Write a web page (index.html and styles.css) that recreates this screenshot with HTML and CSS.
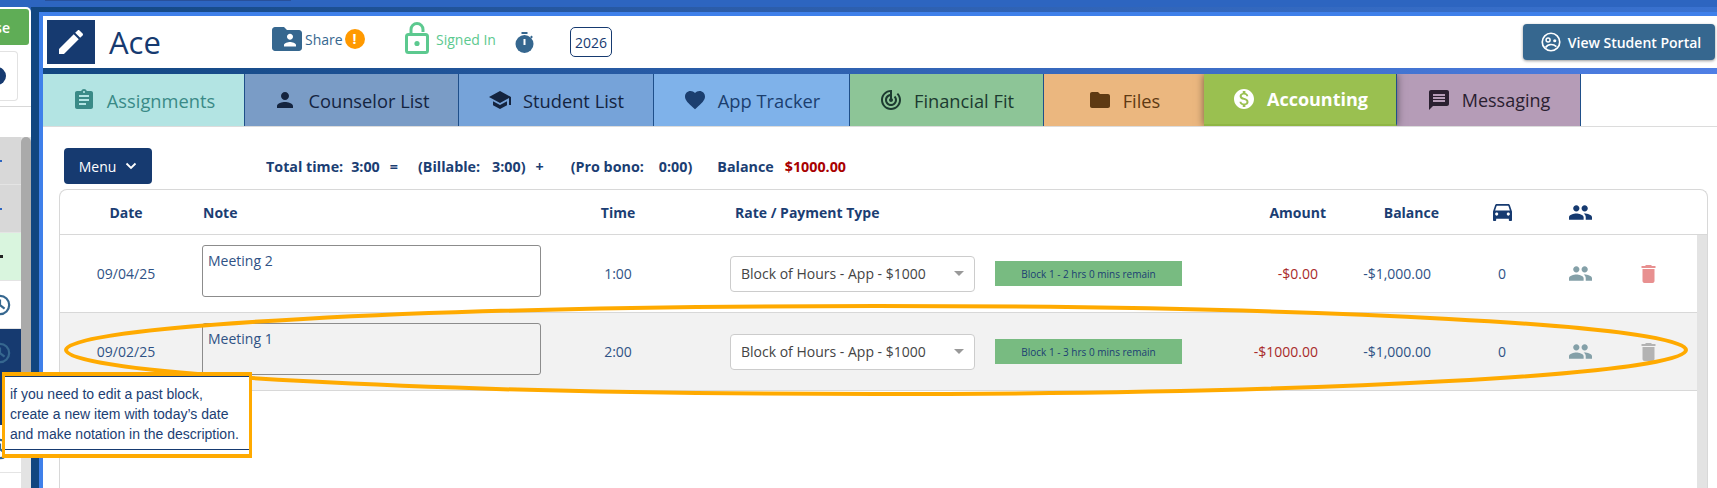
FILE: index.html
```html
<!DOCTYPE html>
<html lang="en">
<head>
  <meta charset="UTF-8" />
  <meta name="viewport" content="width=device-width, initial-scale=1.0"/>
  <title>Accounting - Ace</title>
  <link rel="stylesheet" href="styles.css">
</head>
<body>
  <div class="top-strip"><div class="top-search"></div></div>
  <div class="app">
    <aside class="sidebar">
      <div class="close-btn"><span>Close</span></div>
      <div class="side-card"><span class="side-dot"></span></div>
      <div class="side-rule"></div>
      <div class="side-list">
        <div class="side-rows">
          <div class="side-row grey"><span class="tick"></span></div>
          <div class="side-row grey"><span class="tick"></span></div>
          <div class="side-row green"><span class="check"></span></div>
          <div class="side-row">
            <svg class="clock" viewBox="0 0 24 24"><circle cx="12" cy="12" r="10" fill="none" stroke="#36678f" stroke-width="2.4"/><path d="M12 6v6l5 4" fill="none" stroke="#36678f" stroke-width="2.4"/></svg>
          </div>
          <div class="side-row navy">
            <svg class="clock" viewBox="0 0 24 24"><circle cx="12" cy="12" r="10" fill="none" stroke="#36678f" stroke-width="2.4"/><path d="M12 6v6l5 4" fill="none" stroke="#36678f" stroke-width="2.4"/></svg>
          </div>
          <div class="side-row navy"></div>
          <div class="side-row">
            <svg class="clock" viewBox="0 0 24 24"><circle cx="12" cy="12" r="10" fill="none" stroke="#36678f" stroke-width="2.4"/><path d="M12 6v6l5 4" fill="none" stroke="#36678f" stroke-width="2.4"/></svg>
          </div>
        </div>
        <div class="side-scroll"><div class="side-thumb"></div></div>
      </div>
    </aside>

    <div class="frame">
      <div class="frame-band"></div>
      <main class="panel">
        <header class="head">
          <div class="logo">
            <svg viewBox="0 0 24 24"><path d="M3 17.25V21h3.75L17.81 9.94l-3.75-3.75L3 17.25zM20.71 7.04c.39-.39.39-1.02 0-1.41l-2.34-2.34c-.39-.39-1.02-.39-1.41 0l-1.83 1.83 3.75 3.75 1.83-1.83z"/></svg>
          </div>
          <h1 class="name">Ace</h1>
          <div class="share">
            <svg viewBox="2 4 20 16"><path d="M20 6h-8l-2-2H4c-1.1 0-1.99.9-1.99 2L2 18c0 1.1.9 2 2 2h16c1.1 0 2-.9 2-2V8c0-1.1-.9-2-2-2zm-6 2.5c1.1 0 2 .9 2 2s-.9 2-2 2-2-.9-2-2 .9-2 2-2zm4 8.5h-8v-1c0-1.33 2.67-2 4-2s4 .67 4 2v1z"/></svg>
            <span>Share</span>
            <b class="alert">!</b>
          </div>
          <div class="signed">
            <svg viewBox="0 0 24 32"><rect x="1.5" y="12.5" width="21" height="18" rx="2" fill="none" stroke="#5cc98f" stroke-width="3"/><path d="M6 12V7.500a6 6 0 0 1 12 0V10" fill="none" stroke="#5cc98f" stroke-width="3"/><circle cx="12" cy="21.500" r="2.600" fill="#5cc98f"/></svg>
            <span>Signed In</span>
          </div>
          <svg class="stopwatch" viewBox="3 1 18 21"><path d="M9 1h6v2H9zM17.6 6l1.4-1.4 1.400 1.400-1.400 1.400z"/><circle cx="12" cy="13" r="9"/><path d="M11 8h2v6h-2z" fill="#fff"/></svg>
          <div class="year">2026</div>
          <button class="portal-btn" type="button">
            <svg viewBox="0 0 24 24" fill="none" stroke="#fff">
              <circle cx="12" cy="12" r="10.500" stroke-width="2"/>
              <circle cx="8.500" cy="9.500" r="2.400" stroke-width="1.800"/>
              <circle cx="16.500" cy="10.500" r="1.900" fill="#fff" stroke="none"/>
              <path d="M5.500 18.500c2-2.800 4.200-3.500 6.500-3.500s4.500.7 6.500 2.500" stroke-width="2"/>
            </svg>
            View Student Portal
          </button>
        </header>
        <div class="head-strip"></div>

        <nav class="tabs">
          <a class="tab tab-assign">
            <svg viewBox="0 0 24 24"><path d="M19 3h-4.18C14.4 1.84 13.3 1 12 1c-1.3 0-2.4.84-2.82 2H5c-1.1 0-2 .9-2 2v14c0 1.1.9 2 2 2h14c1.1 0 2-.9 2-2V5c0-1.1-.9-2-2-2zm-7 0c.55 0 1 .45 1 1s-.45 1-1 1-1-.45-1-1 .45-1 1-1zm2 14H7v-2h7v2zm3-4H7v-2h10v2zm0-4H7V7h10v2z"/></svg>
            Assignments
          </a>
          <a class="tab tab-counselor">
            <svg viewBox="0 0 24 24"><path d="M12 12c2.21 0 4-1.79 4-4s-1.79-4-4-4-4 1.79-4 4 1.79 4 4 4zm0 2c-2.67 0-8 1.34-8 4v2h16v-2c0-2.66-5.33-4-8-4z"/></svg>
            Counselor List
          </a>
          <a class="tab tab-student">
            <svg viewBox="0 0 24 24"><path d="M5 13.18v4L12 21l7-3.82v-4L12 17l-7-3.82zM12 3L1 9l11 6 9-4.91V17h2V9L12 3z"/></svg>
            Student List
          </a>
          <a class="tab tab-app">
            <svg viewBox="0 0 24 24"><path d="M12 21.35l-1.45-1.32C5.4 15.36 2 12.28 2 8.5 2 5.42 4.42 3 7.5 3c1.74 0 3.41.81 4.5 2.09C13.09 3.81 14.76 3 16.5 3 19.58 3 22 5.42 22 8.5c0 3.78-3.4 6.86-8.55 11.54L12 21.35z"/></svg>
            App Tracker
          </a>
          <a class="tab tab-fin">
            <svg viewBox="0 0 24 24"><path d="M19.07 4.93l-1.41 1.41C19.1 7.79 20 9.79 20 12c0 4.42-3.58 8-8 8s-8-3.58-8-8c0-4.08 3.05-7.44 7-7.93v2.02C8.16 6.57 6 9.03 6 12c0 3.31 2.69 6 6 6s6-2.69 6-6c0-1.66-.67-3.16-1.76-4.24l-1.41 1.41C15.55 9.9 16 10.9 16 12c0 2.21-1.79 4-4 4s-4-1.79-4-4c0-1.86 1.28-3.41 3-3.86v2.14c-.6.35-1 .98-1 1.72 0 1.1.9 2 2 2s2-.9 2-2c0-.74-.4-1.38-1-1.72V2h-1C6.48 2 2 6.48 2 12s4.48 10 10 10 10-4.48 10-10c0-2.76-1.12-5.26-2.93-7.07z"/></svg>
            Financial Fit
          </a>
          <a class="tab tab-files">
            <svg viewBox="0 0 24 24"><path d="M10 4H4c-1.1 0-1.99.9-1.99 2L2 18c0 1.1.9 2 2 2h16c1.1 0 2-.9 2-2V8c0-1.1-.9-2-2-2h-8l-2-2z"/></svg>
            Files
          </a>
          <a class="tab tab-accounting">
            <svg viewBox="0 0 24 24"><path d="M12 2C6.48 2 2 6.48 2 12s4.48 10 10 10 10-4.48 10-10S17.52 2 12 2zm1.41 16.09V20h-2.67v-1.93c-1.71-.36-3.16-1.46-3.27-3.4h1.96c.1 1.05.82 1.87 2.65 1.87 1.96 0 2.4-.98 2.4-1.59 0-.83-.44-1.61-2.67-2.14-2.48-.6-4.18-1.62-4.18-3.67 0-1.72 1.39-2.84 3.11-3.21V4h2.67v1.95c1.86.45 2.79 1.86 2.87 3.39H14.3c-.05-1.11-.64-1.87-2.22-1.87-1.5 0-2.4.68-2.4 1.64 0 .84.65 1.39 2.67 1.91s4.18 1.39 4.18 3.91c-.01 1.83-1.38 2.83-3.12 3.16z"/></svg>
            Accounting
          </a>
          <a class="tab tab-msg">
            <svg viewBox="0 0 24 24"><path d="M20 2H4c-1.1 0-1.99.9-1.99 2L2 22l4-4h14c1.1 0 2-.9 2-2V4c0-1.1-.9-2-2-2zm-2 12H6v-2h12v2zm0-3H6V9h12v2zm0-3H6V6h12v2z"/></svg>
            Messaging
          </a>
        </nav>

        <section class="content">
          <div class="toolbar">
            <button class="menu-btn" type="button">
              Menu
              <svg viewBox="0 0 12 8"><path d="M1.500 1.500L6 6l4.500-4.500" fill="none" stroke="#fff" stroke-width="1.800"/></svg>
            </button>
            <div class="totals">
              <span class="t-label">Total time:</span>
              <span class="t-val">3:00</span>
              <span class="t-op">=</span>
              <span class="t-bill">(Billable:</span>
              <span class="t-bill-val">3:00)</span>
              <span class="t-op">+</span>
              <span class="t-bono">(Pro bono:</span>
              <span class="t-bono-val">0:00)</span>
              <span class="t-bal">Balance</span>
              <span class="t-red">$1000.00</span>
            </div>
          </div>

          <div class="card">
            <div class="line line-head">
              <div class="c-date">Date</div>
              <div class="c-note">Note</div>
              <div class="c-time">Time</div>
              <div class="c-rate">Rate / Payment Type</div>
              <div class="c-block"></div>
              <div class="c-amount">Amount</div>
              <div class="c-balance">Balance</div>
              <div class="c-car">
                <svg class="car-ico" viewBox="3 5 18 16"><path d="M18.920 6.010C18.720 5.420 18.160 5 17.500 5h-11c-.66 0-1.210.42-1.420 1.010L3 12v8c0 .55.45 1 1 1h1c.55 0 1-.45 1-1v-1h12v1c0 .55.45 1 1 1h1c.55 0 1-.45 1-1v-8l-2.080-5.990zM6.500 16c-.83 0-1.500-.67-1.500-1.500S5.670 13 6.500 13s1.500.67 1.500 1.500S7.330 16 6.500 16zm11 0c-.83 0-1.500-.67-1.500-1.500s.67-1.500 1.500-1.500 1.500.67 1.500 1.500-.67 1.500-1.500 1.500zM5 11l1.500-4.500h11L19 11H5z"/></svg>
              </div>
              <div class="c-people">
                <svg class="people-ico navy-ico" viewBox="1 5 22 14"><path d="M16 11c1.660 0 2.990-1.340 2.990-3S17.660 5 16 5c-1.660 0-3 1.340-3 3s1.340 3 3 3zm-8 0c1.660 0 2.990-1.340 2.990-3S9.660 5 8 5C6.340 5 5 6.340 5 8s1.340 3 3 3zm0 2c-2.330 0-7 1.170-7 3.500V19h14v-2.500c0-2.330-4.670-3.500-7-3.500zm8 0c-.29 0-.62.02-.97.05 1.160.84 1.970 1.970 1.970 3.450V19h6v-2.500c0-2.330-4.670-3.500-7-3.500z"/></svg>
              </div>
              <div class="c-trash"></div>
            </div>

            <div class="body">
              <div class="rows">
                <div class="line line-row">
                  <div class="c-date">09/04/25</div>
                  <div class="c-note"><div class="note-box">Meeting 2</div></div>
                  <div class="c-time">1:00</div>
                  <div class="c-rate">
                    <div class="select"><span>Block of Hours - App - $1000</span><i class="caret"></i></div>
                  </div>
                  <div class="c-block"><div class="block-tag">Block 1 - 2 hrs 0 mins remain</div></div>
                  <div class="c-amount neg">-$0.00</div>
                  <div class="c-balance">-$1,000.00</div>
                  <div class="c-car">0</div>
                  <div class="c-people">
                    <svg class="people-ico" viewBox="1 5 22 14"><path d="M16 11c1.660 0 2.990-1.340 2.990-3S17.660 5 16 5c-1.660 0-3 1.340-3 3s1.340 3 3 3zm-8 0c1.660 0 2.990-1.340 2.990-3S9.660 5 8 5C6.340 5 5 6.340 5 8s1.340 3 3 3zm0 2c-2.330 0-7 1.170-7 3.500V19h14v-2.500c0-2.330-4.670-3.500-7-3.500zm8 0c-.29 0-.62.02-.97.05 1.160.84 1.970 1.970 1.970 3.450V19h6v-2.500c0-2.330-4.670-3.500-7-3.500z"/></svg>
                  </div>
                  <div class="c-trash">
                    <svg class="trash-ico live" viewBox="5 3 14 18"><path d="M6 19c0 1.100.9 2 2 2h8c1.100 0 2-.9 2-2V7H6v12zM19 4h-3.500l-1-1h-5l-1 1H5v2h14V4z"/></svg>
                  </div>
                </div>
                <div class="line line-row past">
                  <div class="c-date">09/02/25</div>
                  <div class="c-note"><div class="note-box">Meeting 1</div></div>
                  <div class="c-time">2:00</div>
                  <div class="c-rate">
                    <div class="select"><span>Block of Hours - App - $1000</span><i class="caret"></i></div>
                  </div>
                  <div class="c-block"><div class="block-tag">Block 1 - 3 hrs 0 mins remain</div></div>
                  <div class="c-amount neg">-$1000.00</div>
                  <div class="c-balance">-$1,000.00</div>
                  <div class="c-car">0</div>
                  <div class="c-people">
                    <svg class="people-ico" viewBox="1 5 22 14"><path d="M16 11c1.660 0 2.990-1.340 2.990-3S17.660 5 16 5c-1.660 0-3 1.340-3 3s1.340 3 3 3zm-8 0c1.660 0 2.990-1.340 2.990-3S9.660 5 8 5C6.340 5 5 6.340 5 8s1.340 3 3 3zm0 2c-2.330 0-7 1.170-7 3.500V19h14v-2.500c0-2.330-4.670-3.500-7-3.500zm8 0c-.29 0-.62.02-.97.05 1.160.84 1.970 1.970 1.970 3.450V19h6v-2.500c0-2.330-4.670-3.500-7-3.500z"/></svg>
                  </div>
                  <div class="c-trash">
                    <svg class="trash-ico" viewBox="5 3 14 18"><path d="M6 19c0 1.100.9 2 2 2h8c1.100 0 2-.9 2-2V7H6v12zM19 4h-3.500l-1-1h-5l-1 1H5v2h14V4z"/></svg>
                  </div>
                </div>
              </div>
              <div class="body-scroll"></div>
            </div>
          </div>
        </section>
      </main>
    </div>
  </div>

  <!-- annotation drawn over the screenshot -->
  <svg class="ring" viewBox="0 0 1717 488"><ellipse cx="876" cy="350" rx="810" ry="44" fill="none" stroke="#ffaa00" stroke-width="4"/></svg>
  <div class="note-tip">
    <p>if you need to edit a past block,<br>create a new item with today’s date<br>and make notation in the description.</p>
  </div>
</body>
</html>
```

FILE: styles.css
```css
* {
  box-sizing: border-box;
}

html, body {
  margin: 0;
  height: 488px;
  overflow: hidden;
}

body {
  font-family: "Open Sans", sans-serif;
  background: #2d65c0;
  color: #1b3e73;
}

.top-strip {
  height: 7px;
  background: #2d65c0;
  padding-left: 45px;
}

.top-search {
  width: 246px;
  height: 1px;
  background: #28509a;
}

.app {
  display: flex;
  height: 481px;
}

/* left list, mostly cut off */
.sidebar {
  width: 31px;
  flex-shrink: 0;
  background: #fff;
  border-top-right-radius: 5px;
  padding-top: 2px;
  overflow: hidden;
  display: flex;
  flex-direction: column;
}

.close-btn {
  width: 29px;
  height: 36px;
  background: #5fad56;
  border-radius: 0 3px 3px 0;
  color: #fff;
  font-weight: 600;
  font-size: 14px;
  display: flex;
  justify-content: flex-end;
  align-items: center;
  padding-right: 19px;
  overflow: hidden;
  flex-shrink: 0;
}

.side-card {
  width: 18px;
  height: 50px;
  margin-top: 6px;
  border: 1px solid #e2e2e2;
  border-left: none;
  border-radius: 0 4px 4px 0;
  display: flex;
  align-items: center;
  justify-content: flex-end;
  padding-right: 11px;
  flex-shrink: 0;
}

.side-dot {
  flex-shrink: 0;
  width: 18px;
  height: 18px;
  border-radius: 50%;
  background: #163a70;
}

.side-rule {
  height: 1px;
  margin-top: 5px;
  background: #d8d8d8;
  flex-shrink: 0;
}

.side-list {
  margin-top: 30px;
  display: flex;
  flex: 1;
}

.side-rows {
  width: 21px;
}

.side-row {
  height: 48px;
  border-bottom: 1px solid #e4e4e4;
  display: flex;
  align-items: center;
  justify-content: flex-end;
  padding-right: 10px;
  overflow: hidden;
}

.side-row.grey {
  background: #d8d8d8;
  justify-content: flex-start;
  padding-right: 0;
}

.side-row.green {
  background: #d9f5de;
  justify-content: flex-start;
  padding-right: 0;
}

.side-row.navy {
  background: #163a70;
  border-bottom: none;
}

.tick {
  width: 2px;
  height: 2px;
  background: #2d65c0;
}

.check {
  width: 3px;
  height: 3px;
  background: #222;
}

.clock {
  width: 22px;
  height: 22px;
  flex-shrink: 0;
}

.side-scroll {
  width: 10px;
  background: #e3e3e3;
}

.side-thumb {
  height: 300px;
  background: #aaa;
  border-radius: 5px 5px 0 0;
}

/* right frame */
.frame {
  flex: 1;
  min-width: 0;
  display: flex;
  flex-direction: column;
  background: #114680;
  padding-left: 8px;
}

.frame-band {
  height: 5px;
  margin-left: -8px;
  background: linear-gradient(90deg, #114680, #2b5ca8 40%, #3a72d0);
}

.panel {
  flex: 1;
  min-height: 0;
  background: #fff;
  border-left: 4px solid #3f80ea;
  border-top: 4px solid #3f80ea;
}

.head {
  height: 52px;
  display: flex;
  align-items: center;
  padding-left: 4px;
}

.logo {
  width: 48px;
  height: 44px;
  background: #163a70;
  display: flex;
  align-items: center;
  justify-content: center;
}

.logo svg {
  width: 32px;
  height: 32px;
  fill: #fff;
}

.name {
  margin: 0 0 0 14px;
  width: 163px;
  font-size: 31px;
  font-weight: 400;
  color: #163a70;
}

.share {
  width: 133px;
  display: flex;
  align-items: center;
  font-size: 14px;
  color: #36678f;
  margin-top: -6px;
}

.share svg {
  width: 30px;
  height: 24px;
  fill: #36678f;
  margin-right: 3px;
}

.alert {
  width: 20px;
  height: 20px;
  margin-left: 2px;
  border-radius: 50%;
  background: #ff9900;
  color: #fff;
  font-size: 14px;
  text-align: center;
  line-height: 20px;
}

.signed {
  width: 110px;
  display: flex;
  align-items: center;
  font-size: 14px;
  color: #5cc98f;
  margin-top: -8px;
}

.signed svg {
  width: 24px;
  height: 32px;
  margin-right: 7px;
}

.signed span {
  margin-top: 2px;
}

.stopwatch {
  width: 19px;
  height: 21px;
  fill: #36678f;
}

.year {
  width: 42px;
  height: 30px;
  margin-left: 36px;
  border: 1px solid #163a70;
  border-radius: 5px;
  font-size: 14px;
  color: #163a70;
  display: flex;
  align-items: center;
  justify-content: center;
}

.portal-btn {
  margin-left: auto;
  margin-right: 2px;
  width: 192px;
  height: 36px;
  padding: 0 0 0 4px;
  background: #36678f;
  border: none;
  border-radius: 4px;
  box-shadow: 0 1px 3px rgba(0, 0, 0, 0.4);
  color: #fff;
  font-family: inherit;
  font-weight: 600;
  font-size: 14px;
  display: flex;
  align-items: center;
  justify-content: center;
  gap: 7px;
}

.portal-btn svg {
  width: 20px;
  height: 20px;
}

.head-strip {
  height: 6px;
  background: linear-gradient(90deg, #114680, #4f7fe5);
}

.tabs {
  height: 53px;
  display: flex;
  overflow: hidden;
  border-bottom: 1px solid #dcdcdc;
}

.tab {
  height: 52px;
  display: flex;
  align-items: center;
  justify-content: center;
  gap: 11px;
  font-size: 18.3px;
  border-right: 1px solid #1f4f8a;
}

.tab svg {
  width: 24px;
  height: 24px;
  fill: currentColor;
}

.tab-assign { width: 202px; background: #b3e4e3; color: #3a8a87; }
.tab-counselor { width: 214px; background: #7a9cc6; color: #14243f; }
.tab-student { width: 195px; background: #76a3d9; color: #14243f; }
.tab-app { width: 196px; background: #7fb2ea; color: #1b3e6f; }
.tab-fin { width: 194px; background: #8dc597; color: #1c3a30; }
.tab-files { width: 160px; background: #ebb77f; color: #5e3a13; border-right: none; }
.tab-accounting {
  width: 193px;
  background: #9ac050;
  color: #fff;
  font-weight: 700;
  font-size: 18px;
  border-bottom: 2px solid #8fb644;
  box-shadow: 0 0 8px rgba(0, 0, 0, 0.5);
  position: relative;
}
.tab-msg { width: 184px; background: #b59cb7; color: #2a2030; font-size: 18px; }

.content {
  padding: 21px 9px 0 16px;
}

.toolbar {
  height: 41px;
  display: flex;
  align-items: flex-start;
}

.menu-btn {
  width: 88px;
  height: 36px;
  margin-left: 5px;
  background: #163a70;
  border: none;
  border-radius: 4px;
  color: #fff;
  font-family: inherit;
  font-size: 14px;
  display: flex;
  align-items: center;
  justify-content: center;
  gap: 9px;
}

.menu-btn svg {
  width: 12px;
  height: 8px;
}

.totals {
  display: flex;
  height: 36px;
  align-items: center;
  margin-left: 114px;
  font-size: 14.3px;
  font-weight: 700;
  color: #1b3e73;
  white-space: nowrap;
}

.t-val { margin-left: 8px; }
.t-op { margin-left: 10px; }
.t-bill { margin-left: 20px; }
.t-bill-val { margin-left: 12px; }
.t-bono { margin-left: 27px; }
.t-bono-val { margin-left: 15px; }
.t-bal { margin-left: 25px; }
.t-red { margin-left: 11px; color: #a80000; }

.card {
  height: 320px;
  border: 1px solid #d8d8d8;
  border-bottom: none;
  border-radius: 8px 8px 0 0;
}

.line {
  display: grid;
  grid-template-columns: 132px 368px 116px 309px 207px 134px 113px 126px 30px 1fr;
  align-items: center;
  font-size: 14px;
}

.line-head {
  height: 45px;
  border-bottom: 1px solid #d8d8d8;
  font-weight: 700;
  color: #1b3e73;
}

.line-row {
  height: 78px;
  border-bottom: 1px solid #d8d8d8;
  color: #2f5285;
}

.past {
  background: #f2f2f2;
}

.c-date, .c-time, .c-car, .c-people {
  text-align: center;
}

.c-note {
  padding: 0 19px 0 10px;
}

.line-head .c-note {
  padding-left: 11px;
}

.c-rate {
  padding-left: 54px;
}

.line-head .c-rate {
  padding-left: 59px;
}

.c-block {
  padding-left: 10px;
}

.c-amount, .c-balance {
  text-align: right;
}

.line-row .c-amount, .line-row .c-balance {
  padding-right: 8px;
}

.neg {
  color: #a82a2a;
}

.note-box {
  height: 52px;
  margin-top: -6px;
  padding: 5px 5px;
  border: 1px solid #8c8c8c;
  border-radius: 3px;
  color: #2f5285;
}

.select {
  width: 245px;
  height: 36px;
  background: #fff;
  border: 1px solid #ccc;
  border-radius: 4px;
  padding: 0 10px;
  color: #444;
  display: flex;
  align-items: center;
  justify-content: space-between;
}

.caret {
  width: 0;
  height: 0;
  border-left: 5px solid transparent;
  border-right: 5px solid transparent;
  border-top: 5px solid #999;
}

.block-tag {
  width: 187px;
  height: 25px;
  background: #78bb81;
  color: #1b3e73;
  font-size: 10px;
  display: flex;
  align-items: center;
  justify-content: center;
}

.car-ico {
  width: 19px;
  height: 17px;
  fill: #163a70;
  display: block;
  margin: 0 auto;
}

.people-ico {
  width: 23px;
  height: 15px;
  fill: #84a0a8;
  display: block;
  margin: 0 auto;
}

.navy-ico {
  fill: #163a70;
}

.trash-ico {
  width: 15px;
  height: 18px;
  fill: #b3b3b3;
  display: block;
  margin: 0 0 0 46px;
}

.trash-ico.live {
  fill: #e89090;
}

.body {
  display: flex;
  height: 274px;
}

.rows {
  flex: 1;
  min-width: 0;
}

.body-scroll {
  width: 10px;
  background: #e3e3e3;
}

.ring {
  position: absolute;
  left: 0;
  top: 0;
  width: 1717px;
  height: 488px;
  pointer-events: none;
}

.note-tip {
  position: absolute;
  left: 2px;
  top: 372px;
  width: 250px;
  height: 86px;
  border: 4px solid #ffaa00;
  border-width: 4px 3px;
  background: #fff;
}

.note-tip p {
  margin: 0;
  height: 74px;
  padding: 7px 0 0 5px;
  border-top: 1px solid #163a70;
  border-bottom: 1px solid #163a70;
  font-family: "Liberation Sans", Arial, sans-serif;
  font-size: 14px;
  line-height: 20px;
  color: #1b3e73;
  white-space: nowrap;
}
```
